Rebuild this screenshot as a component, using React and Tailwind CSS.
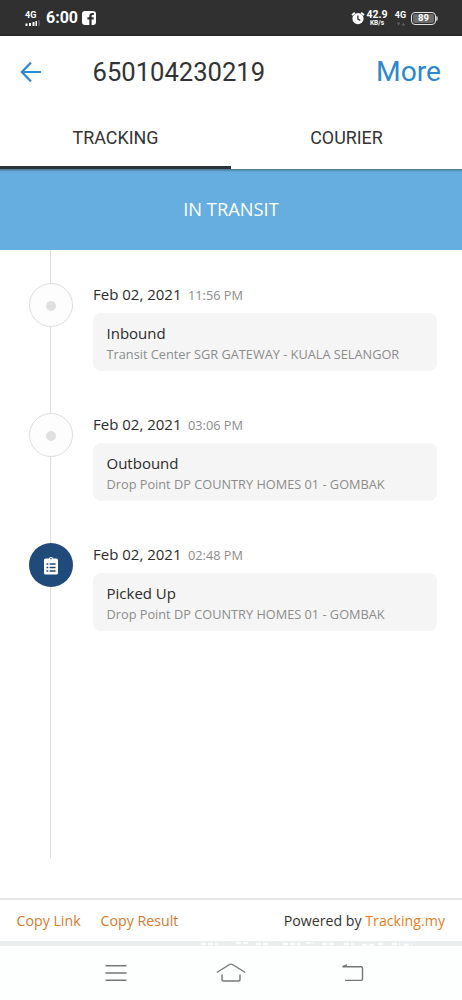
const events = [
  { date: "Feb 02, 2021", time: "11:56 PM", title: "Inbound", place: "Transit Center SGR GATEWAY - KUALA SELANGOR" },
  { date: "Feb 02, 2021", time: "03:06 PM", title: "Outbound", place: "Drop Point DP COUNTRY HOMES 01 - GOMBAK" },
  { date: "Feb 02, 2021", time: "02:48 PM", title: "Picked Up", place: "Drop Point DP COUNTRY HOMES 01 - GOMBAK", picked: true },
];

function StatusBar() {
  return (
    <div className="flex h-9 shrink-0 items-center border-b-2 border-[#292929] bg-[#303030] pt-[2px] pl-[25px] pr-[24px] text-white">
      <div className="flex w-4 flex-col">
        <span className="text-[9px] leading-[8px] font-bold">4G</span>
        <svg className="mt-px h-[6px] w-4" viewBox="0 0 16 6">
          <path d="M.5 3.500h2V6h-2zM4 3h2v3H4zM7.500 2h2v4h-2zM10.500 1h1.500v5h-1.500z" fill="#fff" />
          <path d="M13 0h2v6h-2z" fill="#555" />
        </svg>
      </div>
      <span className="ml-[5px] text-[16px] leading-5 font-bold">6:00</span>
      <svg className="ml-[4px] size-[14px]" viewBox="0 0 14 14">
        <rect width="14" height="14" rx="3" fill="#fff" />
        <path d="M7.300 14V8.600H5.400V6.300h1.900V4.900c0-2 1.200-3 2.900-3h1.600v2.200h-1.100c-.8 0-1.100.4-1.100 1.100v1.100h2.200l-.3 2.300H9.600V14z" fill="#303030" />
      </svg>
      <div className="flex-1" />
      <svg className="size-[14px]" viewBox="0 0 14 14">
        <circle cx="7" cy="7.600" r="5.600" fill="#fff" />
        <path d="M1 4.200 3.800 1.700M13 4.200 10.200 1.700" stroke="#fff" strokeWidth="1.800" />
        <path d="M6.900 4.500v3.600l2.400 1.300" fill="none" stroke="#303030" strokeWidth="1.300" />
      </svg>
      <div className="ml-px flex w-[22px] flex-col items-center">
        <span className="text-[10.500px] leading-[11px] font-bold">42.9</span>
        <span className="text-[6.500px] leading-[7px] font-bold">KB/s</span>
      </div>
      <div className="ml-[6px] flex w-[13px] flex-col items-center">
        <span className="text-[9px] leading-[9px] font-bold">4G</span>
        <svg className="mt-[2px] h-[4px] w-[8px]" viewBox="0 0 8 4">
          <path d="M0 .5h3L1.500 3.500zM5 3.500h3L6.500.5z" fill="#666" />
        </svg>
      </div>
      <div className="ml-[4px] flex items-center">
        <div className="flex h-[13px] w-[25px] items-center justify-center rounded-[4px] border-[1.500px] border-[#e4e4e4] p-px">
          <span className="flex h-full w-full items-center justify-center rounded-[2px] bg-[#6b6b6b] text-[9.500px] leading-none font-bold">89</span>
        </div>
        <div className="h-[5px] w-[2px] rounded-r bg-[#aaa]" />
      </div>
    </div>
  );
}

function Marker({ picked }) {
  if (picked) {
    return (
      <div className="flex size-11 shrink-0 items-center justify-center rounded-full bg-[#1f4a7a]">
        <svg className="h-[19px] w-[14px]" viewBox="0 0 14 19">
          <path d="M1.500 2.500H5a2.100 2.100 0 0 1 4 0h3.500A1.500 1.500 0 0 1 14 4v13a1.500 1.500 0 0 1-1.500 1.500h-11A1.500 1.500 0 0 1 0 17V4a1.500 1.500 0 0 1 1.500-1.500z" fill="#fff" />
          <circle cx="7" cy="2.700" r=".8" fill="#1f4a7a" />
          <path d="M2.500 8h1.800M5.600 8h6M2.500 11.500h1.800M5.600 11.500h6M2.500 15h1.800M5.600 15h6" stroke="#1f4a7a" strokeWidth="1.300" />
        </svg>
      </div>
    );
  }
  return (
    <div className="flex size-11 shrink-0 items-center justify-center rounded-full border border-[#dedede] bg-[#fdfdfd]">
      <div className="mt-[2px] size-[10px] rounded-full bg-[#e0e0e0]" />
    </div>
  );
}

function Event({ date, time, title, place, picked }) {
  return (
    <div className="flex h-[130px] items-start">
      <Marker picked={picked} />
      <div className="ml-5 w-[344px]">
        <div className="flex h-[30px] items-baseline gap-[6.500px] whitespace-nowrap">
          <span className="text-[15px] leading-[22px] text-[#2c2c2c]">{date}</span>
          <span className="text-[12.750px] leading-[22px] text-[#8c8c8c]">{time}</span>
        </div>
        <div className="h-[58px] rounded-lg bg-[#f5f5f5] pt-[10px] pl-[13.500px] whitespace-nowrap">
          <div className="text-[15px] leading-5 text-[#2c2c2c]">{title}</div>
          <div className="text-[12.750px] leading-[22px] text-[#8c8c8c]">{place}</div>
        </div>
      </div>
    </div>
  );
}

export default function App() {
  return (
    <div className="flex h-[1000px] w-[462px] flex-col overflow-hidden bg-white font-['Roboto',sans-serif]">
      <StatusBar />
      <header className="flex h-[71px] shrink-0 items-center pl-[20px] pr-[21px]">
        <svg className="h-[22px] w-[22px]" viewBox="0 0 22 22" fill="none" stroke="#2b88d0" strokeWidth="2.200">
          <path d="M21 11H2M11 1.500 1.800 11l9.200 9.500" />
        </svg>
        <h1 className="ml-[50.500px] flex-1 text-[25.600px] leading-8 text-[#333]">650104230219</h1>
        <span className="text-[28.200px] leading-8 text-[#2b88d0]">More</span>
      </header>
      <nav className="flex h-[62px] shrink-0 text-[17.900px] leading-[62px] text-[#333]">
        <div className="flex h-full w-1/2 justify-center border-b-[3px] border-[#2b3338]">TRACKING</div>
        <div className="flex h-full w-1/2 justify-center">COURIER</div>
      </nav>
      <div className="flex h-[81px] shrink-0 items-center justify-center bg-[#66aee0] bg-[linear-gradient(#4a7590,#66aee0)] bg-[length:100%_3px] bg-no-repeat pb-[2px] font-['Open_Sans',sans-serif] text-[18.300px] text-white">
        IN TRANSIT
      </div>
      <main className="h-[648px] shrink-0 bg-[linear-gradient(#dedede,#dedede)] bg-[length:1px_608px] bg-[position:50px_0] bg-no-repeat pt-[33px] pl-[29px] font-['Open_Sans',sans-serif]">
        {events.map((e) => (
          <Event key={e.time} {...e} />
        ))}
      </main>
      <footer className="flex h-[43px] shrink-0 items-center border-t-2 border-t-[#e6e6e6] pt-px pr-[17px] pl-[16.500px] font-['Open_Sans',sans-serif] text-[14.200px] text-[#333]">
        <span className="text-[#d97a2b]">Copy Link</span>
        <span className="ml-5 flex-1 text-[#d97a2b]">Copy Result</span>
        <span>
          Powered by <span className="text-[#e67e22]">Tracking.my</span>
        </span>
      </footer>
      <svg className="h-[5px] w-full shrink-0 bg-[#ebeeef]" viewBox="0 0 462 5" fill="none">
        <path
          d="M201 3h17M236 2h14M256 3h12M283 3h17M306 2h8M322 3h14M344 3h10M362 4h12M378 3h7M392 3h8M404 4h8"
          stroke="#fbfbfb"
          strokeWidth="2.500"
          strokeDasharray="5 2"
        />
      </svg>
      <div className="flex flex-1 items-center bg-[#fdfefe] pl-[105px]">
        <svg className="h-[18px] w-[22px]" viewBox="0 0 22 18" stroke="#777" strokeWidth="1.500">
          <path d="M.5 1.800h21M.5 9h21M.5 16.300h21" />
        </svg>
        <svg className="ml-[89px] h-[20px] w-[30px]" viewBox="0 0 30 20" fill="none" stroke="#777" strokeWidth="1.400">
          <path d="M.8 9.500 13.500 1.500q1.500-.8 3 0L29.200 9.500M6 11.500v5q0 1.500 1.500 1.500h15q1.500 0 1.500-1.500v-5" />
        </svg>
        <svg className="ml-[95px] h-[18px] w-[23px]" viewBox="0 0 23 18" fill="none" stroke="#777" strokeWidth="1.400">
          <path d="M6 .8 1.500 2.700h18.500q1.500 0 1.500 1.500v10.700q0 1.500-1.500 1.500H4" />
        </svg>
      </div>
    </div>
  );
}
